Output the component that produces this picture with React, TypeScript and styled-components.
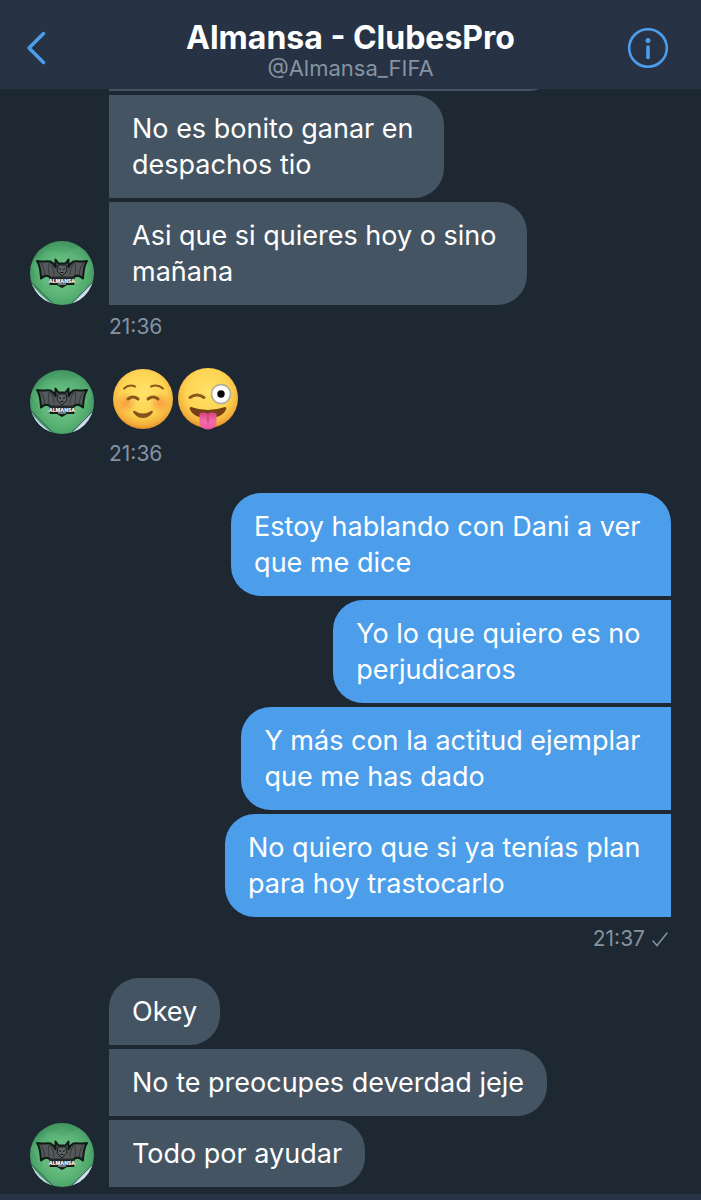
import React from "react";
import styled, { createGlobalStyle } from "styled-components";

const color = {
  page: "#1e2833",
  bar: "#273244",
  incoming: "#445463",
  outgoing: "#4c9eeb",
  accent: "#4c9eeb",
  text: "#ffffff",
  muted: "#8593a1",
};

const GlobalStyle = createGlobalStyle`
  *, *::before, *::after { box-sizing: border-box; }
  body {
    margin: 0;
    background: ${color.page};
    color: ${color.text};
    font-family: Inter, "Liberation Sans", sans-serif;
  }
`;

const Screen = styled.div`
  display: flex;
  flex-direction: column;
  min-height: 100vh;
`;

const Header = styled.header`
  display: flex;
  align-items: center;
  justify-content: space-between;
  height: 89px;
  padding: 7px 32px 0 26px;
  background: ${color.bar};
`;

const IconButton = styled.button<{ $width: number }>`
  display: flex;
  width: ${(p) => p.$width}px;
  padding: 0;
  border: 0;
  background: none;
  color: ${color.accent};
  cursor: pointer;
`;

const Titles = styled.div`
  padding-top: 5px;
  text-align: center;
`;

const Name = styled.h1`
  margin: 0;
  font-size: 32px;
  line-height: 34px;
  font-weight: 700;
`;

const Handle = styled.p`
  margin: 0;
  font-size: 22px;
  line-height: 26px;
  color: ${color.muted};
`;

const Thread = styled.main`
  flex: 1;
  overflow: hidden;
  padding: 0 30px 7px;
`;

const Group = styled.section<{ $own?: boolean }>`
  display: flex;
  flex-direction: column;
  align-items: ${(p) => (p.$own ? "flex-end" : "stretch")};
  gap: 4px;

  & + & {
    margin-top: 27px;
  }
`;

const Row = styled.div`
  display: flex;
  padding-left: 79px;
`;

const AvatarRow = styled.div`
  display: flex;
  align-items: flex-end;
  gap: 15px;
`;

const Bubble = styled.p<{ $own?: boolean; $first?: boolean }>`
  margin: 0;
  padding: 16px 23px 15px;
  font-size: 27px;
  line-height: 36px;
  white-space: break-spaces;
  background: ${(p) => (p.$own ? color.outgoing : color.incoming)};
  border-radius: ${(p) =>
    p.$own
      ? `30px ${p.$first ? "30px" : "0"} 0 30px`
      : `${p.$first ? "30px" : "0"} 30px 30px 0`};
`;

/* Earlier message, scrolled almost completely beneath the header. */
const ScrolledBubble = styled(Bubble)`
  width: 80%;
  height: 67px;
  margin-top: -65px;
`;

const Emojis = styled.div`
  display: flex;
  gap: 4px;
  padding: 0 0 4px 3px;
`;

const Meta = styled.div<{ $own?: boolean; $tight?: boolean }>`
  display: flex;
  align-items: center;
  gap: 6px;
  margin-top: ${(p) => (p.$tight ? "4px" : "6px")};
  padding: ${(p) => (p.$own ? "0 2px 0 0" : "0 0 0 79px")};
  font-size: 21px;
  line-height: 24px;
  color: ${color.muted};
`;

const Composer = styled.footer`
  height: 6px;
  background: ${color.bar};
`;

const AvatarSvg = styled.svg`
  display: block;
  flex: none;
  border-radius: 50%;
`;

function Avatar({ id }: { id: string }) {
  return (
    <AvatarSvg width="64" height="64" viewBox="0 0 64 64" role="img" aria-label="Almansa">
      <defs>
        <radialGradient id={id} cx="50%" cy="55%" r="60%">
          <stop offset="0" stopColor="#78c88e" />
          <stop offset="0.6" stopColor="#56b072" />
          <stop offset="1" stopColor="#3a8e59" />
        </radialGradient>
      </defs>
      <rect width="64" height="64" fill={`url(#${id})`} />
      <path d="M0 24 18 8 34 13 50 5 64 23 50 42 33 33 15 45Z" fill="#82ce99" opacity=".15" />
      <path d="M0 40Q8 54 24 64H0ZM64 40Q54 48 40 64h24Z" fill="#d2dcf4" />
      <path d="M0 40 24 64M64 40 40 64" stroke="#3b7456" strokeWidth="1.2" />
      <path
        d="M7 20C12 21.500 16 19.500 20.500 20.500 23.500 22 24.500 24 25.500 26L25.500 18.500 28.500 22.500H35.500L38.500 18.500V26C39.500 24 40.500 22 43.500 20.500 48 19.500 52 21.500 57 20 53.500 25 53.500 31 53 37.500 49.500 34 46 34 43.500 36.500V43H37L32 46 27 43H20.500V36.500C18 34 14.500 34 11 37.500 10.500 31 10.500 25 7 20Z"
        fill="#55585a"
        stroke="#0e1b14"
        strokeWidth="2"
        strokeLinejoin="round"
      />
      <path
        d="M11 22c3 5 4 9 3.500 12M19 22c-1 5-1 8 .5 12M20 22c3 4 4 8 4 12M53 22c-3 5-4 9-3.500 12M45 22c1 5 1 8-.5 12M44 22c-3 4-4 8-4 12"
        fill="none"
        stroke="#34393a"
        strokeWidth="1"
      />
      <path d="M28 24h8l1 6-5 5-5-5Z" fill="#5c6163" stroke="#171d1b" />
      <path d="M29 27.500l2 1M35 27.500l-2 1M30.500 31.500h3" stroke="#111" strokeWidth="1" />
      <path d="M20 35.500h24v7h-7l-5 3-5-3h-7Z" fill="#202927" />
      <text
        x="32"
        y="41.5"
        textAnchor="middle"
        fontFamily="Inter, sans-serif"
        fontSize="5"
        fontWeight="900"
        fill="#f4f4f5"
      >
        ALMANSA
      </text>
      <path d="M28 43h8" stroke="#c5cec9" strokeWidth="1" />
    </AvatarSvg>
  );
}

function FaceGradient({ id }: { id: string }) {
  return (
    <radialGradient id={id} cx="50%" cy="40%" r="62%">
      <stop offset="0" stopColor="#ffe36a" />
      <stop offset="0.6" stopColor="#fdd352" />
      <stop offset="0.85" stopColor="#f3b03c" />
      <stop offset="1" stopColor="#dd8724" />
    </radialGradient>
  );
}

function SmilingFace() {
  return (
    <svg width="62" height="64" viewBox="0 0 62 64" role="img" aria-label="Cara sonriente">
      <defs>
        <FaceGradient id="smile-face" />
        <radialGradient id="smile-cheek">
          <stop offset="0" stopColor="#f37a30" stopOpacity=".6" />
          <stop offset="1" stopColor="#f37a30" stopOpacity="0" />
        </radialGradient>
      </defs>
      <circle cx="31" cy="33" r="30" fill="url(#smile-face)" />
      <circle cx="14" cy="37" r="11" fill="url(#smile-cheek)" />
      <circle cx="48" cy="37" r="11" fill="url(#smile-cheek)" />
      <g fill="none" stroke="#8b571b" strokeLinecap="round">
        <path d="M12 22.500Q17 18 23 20.500M39 20.500Q46 18 51 22.500" strokeWidth="2" />
        <path d="M16 33q5-4 10 0M36 33q5-4 10 0" strokeWidth="3" />
      </g>
      <path
        d="M23 45q8 5 16 0c2-.8 2.500.8 1 2.500-5 6-13 6-18 0-1.500-1.700-1-3.300 1-2.500Z"
        fill="#87511b"
      />
    </svg>
  );
}

function WinkingFace() {
  return (
    <svg
      width="62"
      height="64"
      viewBox="0 0 62 64"
      role="img"
      aria-label="Cara guiñando un ojo con la lengua fuera"
    >
      <defs>
        <FaceGradient id="wink-face" />
        <linearGradient id="tongue" x1="0" x2="0" y1="0" y2="1">
          <stop offset="0" stopColor="#d9417f" />
          <stop offset="0.5" stopColor="#f36dab" />
          <stop offset="1" stopColor="#ed539a" />
        </linearGradient>
      </defs>
      <circle cx="30" cy="32" r="30" fill="url(#wink-face)" />
      <path d="M12 31.500q7-5 14 0" fill="none" stroke="#8b571b" strokeWidth="3" strokeLinecap="round" />
      <circle cx="43" cy="28" r="9.5" fill="#fff" stroke="#aaa899" strokeWidth="1.5" />
      <circle cx="43" cy="28" r="3.7" fill="#050505" />
      <path
        d="M13 41q17 6 34 0c1.300-.3 1.600.7 1 2.500-2.500 6-9 8.500-18 8.500S14.500 49.500 12 43.500c-.6-1.800-.3-2.800 1-2.500Z"
        fill="#754016"
      />
      <path d="M21.500 47.500q4-2 8 .5 4-2.500 9-.5v8c0 5-3.500 8-8.500 8S21.500 60.500 21.500 55.500Z" fill="url(#tongue)" />
      <path d="M30 48v8" stroke="#ca397c" strokeWidth="1.3" strokeLinecap="round" />
    </svg>
  );
}

function Time({ value, own, tight }: { value: string; own?: boolean; tight?: boolean }) {
  return (
    <Meta $own={own} $tight={tight}>
      <time>{value}</time>
      {own && (
        <svg width="18" height="18" viewBox="0 0 18 18" role="img" aria-label="Enviado">
          <path
            d="m2 11 4 4.500L16 3"
            fill="none"
            stroke="currentColor"
            strokeWidth="1.5"
            strokeLinecap="round"
          />
        </svg>
      )}
    </Meta>
  );
}

const sent = [
  "Estoy hablando con Dani a ver \nque me dice",
  "Yo lo que quiero es no \nperjudicaros",
  "Y más con la actitud ejemplar \nque me has dado",
  "No quiero que si ya tenías plan \npara hoy trastocarlo",
];

export default function App() {
  return (
    <>
      <GlobalStyle />
      <Screen>
        <Header>
          <IconButton $width={48} aria-label="Volver">
            <svg width="21" height="34" viewBox="0 0 21 34">
              <path
                d="M17.500 2.500 3 17l14.500 14.500"
                fill="none"
                stroke="currentColor"
                strokeWidth="3.5"
                strokeLinecap="round"
                strokeLinejoin="round"
              />
            </svg>
          </IconButton>
          <Titles>
            <Name>Almansa - ClubesPro</Name>
            <Handle>@Almansa_FIFA</Handle>
          </Titles>
          <IconButton $width={42} aria-label="Información">
            <svg width="42" height="42" viewBox="0 0 42 42">
              <circle cx="21" cy="21" r="18.8" fill="none" stroke="currentColor" strokeWidth="2.6" />
              <circle cx="21" cy="13.5" r="2.5" fill="currentColor" />
              <path d="M21 20v10.500" stroke="currentColor" strokeWidth="3.6" strokeLinecap="round" />
            </svg>
          </IconButton>
        </Header>

        <Thread>
          <Group>
            <Row>
              <ScrolledBubble aria-hidden="true" />
            </Row>
            <Row>
              <Bubble>{"No es bonito ganar en \ndespachos tio"}</Bubble>
            </Row>
            <AvatarRow>
              <Avatar id="avatar-a" />
              <Bubble>{"Asi que si quieres hoy o sino \nmañana"}</Bubble>
            </AvatarRow>
            <Time value="21:36" />
          </Group>

          <Group>
            <AvatarRow>
              <Avatar id="avatar-b" />
              <Emojis>
                <SmilingFace />
                <WinkingFace />
              </Emojis>
            </AvatarRow>
            <Time value="21:36" tight />
          </Group>

          <Group $own>
            {sent.map((text, i) => (
              <Bubble key={text} $own $first={i === 0}>
                {text}
              </Bubble>
            ))}
            <Time value="21:37" own />
          </Group>

          <Group>
            <Row>
              <Bubble $first>Okey</Bubble>
            </Row>
            <Row>
              <Bubble>No te preocupes deverdad jeje</Bubble>
            </Row>
            <AvatarRow>
              <Avatar id="avatar-c" />
              <Bubble>Todo por ayudar</Bubble>
            </AvatarRow>
          </Group>
        </Thread>
        <Composer />
      </Screen>
    </>
  );
}
